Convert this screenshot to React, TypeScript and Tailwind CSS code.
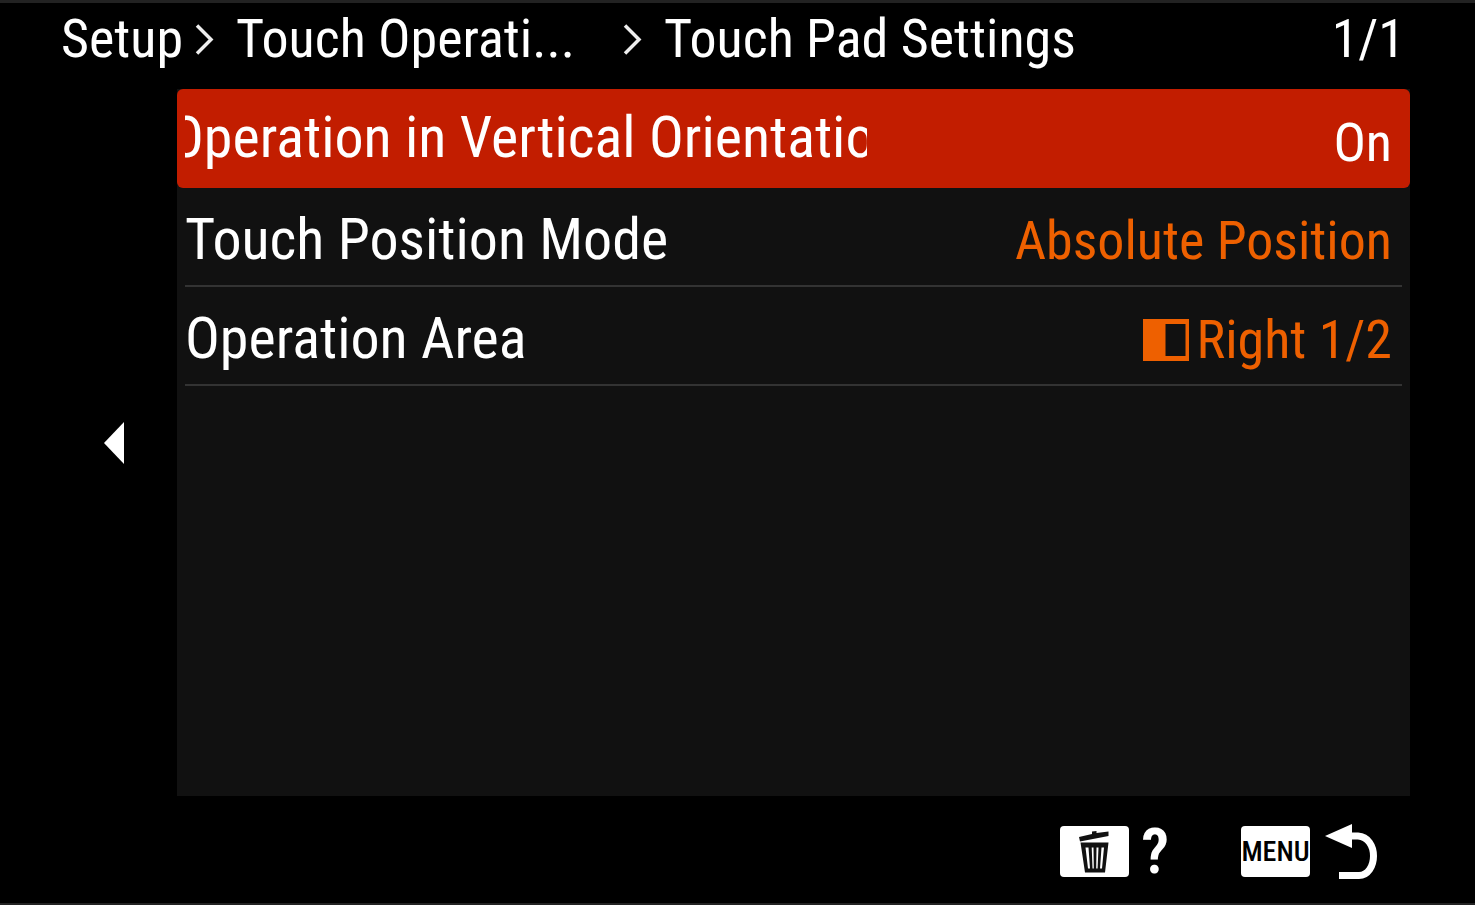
import type { ReactNode } from "react";

function HalfAreaIcon() {
  return (
    <svg viewBox="0 0 46 42" className="h-[42px] w-[46px] shrink-0" aria-hidden="true">
      <path fill="currentColor" fillRule="evenodd" d="M0 0H46V42H0ZM22.500 5V37H42.500V5Z" />
    </svg>
  );
}

function TrashIcon() {
  return (
    <svg viewBox="0 0 69 51" className="h-[51px] w-[69px]" aria-hidden="true">
      <rect width="69" height="51" rx="4" fill="#fff" />
      <path fill="#111" d="M19 11L32 8V5.500L36.500 5V7L48.500 5.500V10L20 15.500Z" />
      <path fill="#111" fillRule="evenodd" d="M20.500 16.500H48.500L45 46.500H25ZM25.500 21.500L28 42.500H30L28.500 21.500ZM31.700 21.500L32.500 42.500H33.800L33.500 21.500ZM36.500 21.500L36.200 42.500H37.600L38.500 21.500ZM41.500 21.500L40 42.500H42L44 21.500Z" />
    </svg>
  );
}

function ReturnIcon() {
  return (
    <svg viewBox="0 0 54 56" className="h-[56px] w-[54px]" aria-hidden="true">
      <path fill="#fff" d="M0 12L27 0V24Z" />
      <path fill="none" stroke="#fff" strokeWidth="7" d="M26 12H33C43 12.500 48.500 22 48.500 32C48.500 42 43 51.500 34 51.500H14" />
    </svg>
  );
}

function Separator() {
  return (
    <svg viewBox="0 0 52 72" className="h-[72px] w-[52px]" aria-hidden="true">
      <path fill="none" stroke="#eee" strokeWidth="3.500" d="M13 22.500L27 36.500L13 50.500" />
    </svg>
  );
}

function MenuRow({ label, value }: { label: string; value: ReactNode }) {
  return (
    <li className="px-2">
      <button
        type="button"
        className="flex h-[99px] w-full items-center justify-between border-b-2 border-[#333] pr-[10px] text-left"
      >
        <span className="pt-1 text-[58px] leading-[72px]">{label}</span>
        <span className="flex items-center gap-2 pt-2 text-[54px] leading-[72px] text-[#ee6000]">{value}</span>
      </button>
    </li>
  );
}

export default function App() {
  return (
    <div className="flex min-h-screen flex-col border-t-[3px] border-b-2 border-[#222] bg-black font-['Roboto_Condensed','Liberation_Sans',sans-serif] whitespace-nowrap text-white">
      <header className="flex h-[86px] items-start justify-between pr-[70px] pl-[61px] text-[54px] leading-[72px]">
        <nav aria-label="Breadcrumb" className="flex">
          <a href="#setup" className="w-[123px]">Setup</a>
          <Separator />
          <a href="#touch-operation" className="w-[376px]">Touch Operati...</a>
          <Separator />
          <h1>Touch Pad Settings</h1>
        </nav>
        <span>1/1</span>
      </header>

      <main className="flex flex-1 pr-[65px]">
        <div className="flex w-[177px] shrink-0 items-center justify-end pr-[53px]">
          <button type="button" aria-label="Back">
            <svg viewBox="0 0 20 42" className="h-[42px] w-5" aria-hidden="true">
              <path fill="#fff" d="M20 0V42L0 21Z" />
            </svg>
          </button>
        </div>
        <ul className="flex-1 bg-[#111]">
          <li>
            <button
              type="button"
              className="flex h-[99px] w-full items-center justify-between rounded-md bg-[#c21d00] pr-[18px] pl-2 text-left"
            >
              <span className="w-[682px] overflow-hidden pb-1 -indent-4 text-[58px] leading-[72px]">
                Operation in Vertical Orientation
              </span>
              <span className="pt-2 text-[54px] leading-[72px]">On</span>
            </button>
          </li>
          <MenuRow label="Touch Position Mode" value="Absolute Position" />
          <MenuRow label="Operation Area" value={<><HalfAreaIcon />Right 1/2</>} />
        </ul>
      </main>

      <footer className="flex h-[107px] items-center justify-end gap-[72px] pt-1 pr-[96px]">
        <button type="button" aria-label="Help ?" className="flex items-center gap-3">
          <TrashIcon />
          <span className="text-[63px] leading-[72px] font-semibold">?</span>
        </button>
        <button type="button" aria-label="MENU return" className="flex items-center gap-[15px]">
          <span className="flex h-[51px] w-[69px] items-center justify-center rounded bg-white text-[28px] font-medium text-black">MENU</span>
          <ReturnIcon />
        </button>
      </footer>
    </div>
  );
}
